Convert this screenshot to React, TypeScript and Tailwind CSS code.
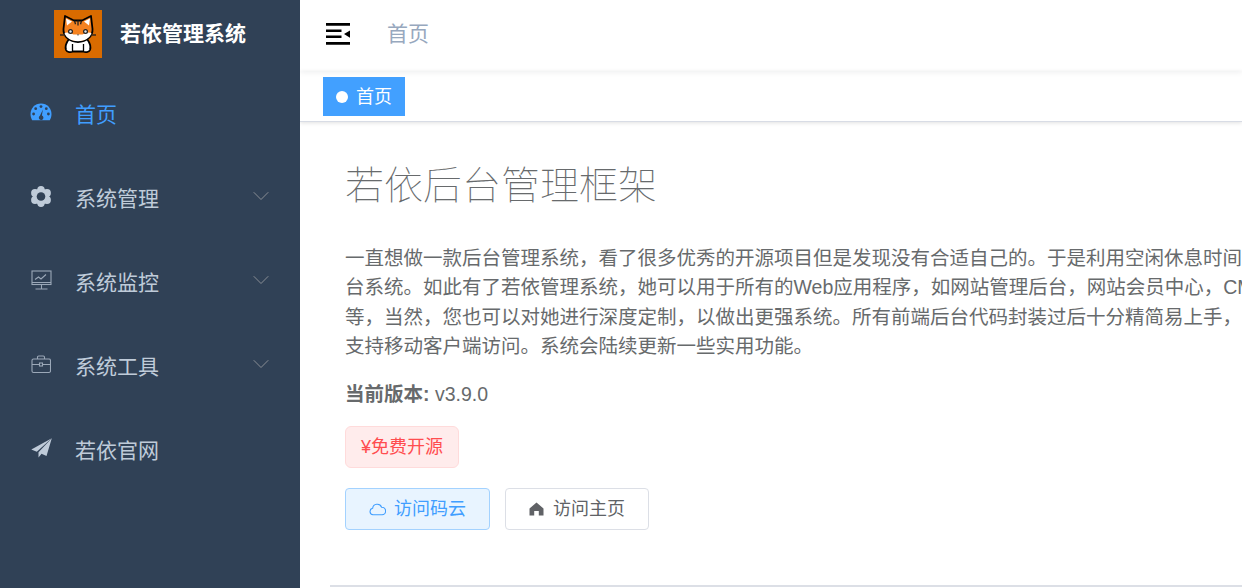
import React from 'react';
import { ChevronDown } from 'lucide-react';

const SIDEBAR = '#304156';

const DashboardIcon = () => (
  <svg width="22" height="18" viewBox="0 0 22 18">
    <path d="M11 0.5C5 0.5 0.5 5.2 0.5 11c0 2.2.6 4.4 1.7 6.2h17.6c1.1-1.8 1.7-4 1.7-6.2C21.500 5.200 17 .5 11 .5z" fill="currentColor" />
    <circle cx="11" cy="3.6" r="1.400" fill={SIDEBAR} />
    <circle cx="5.700" cy="5.700" r="1.400" fill={SIDEBAR} />
    <circle cx="16.300" cy="5.700" r="1.400" fill={SIDEBAR} />
    <circle cx="3.600" cy="11" r="1.400" fill={SIDEBAR} />
    <circle cx="18.400" cy="11" r="1.400" fill={SIDEBAR} />
    <path d="M12.900 6.500L11.900 12.500a2.300 2.300 0 1 1-2 .2z" fill={SIDEBAR} />
  </svg>
);

const GearIcon = () => (
  <svg width="22" height="21" viewBox="0 0 22 21">
    <g fill="currentColor">
      <circle cx="11" cy="10.500" r="8" />
      <circle cx="11" cy="3.800" r="3.700" />
      <circle cx="11" cy="17.200" r="3.700" />
      <circle cx="5" cy="7" r="3.900" />
      <circle cx="17" cy="7" r="3.900" />
      <circle cx="5" cy="14" r="3.900" />
      <circle cx="17" cy="14" r="3.900" />
    </g>
    <circle cx="11" cy="10.500" r="4.300" fill={SIDEBAR} />
  </svg>
);

const MonitorIcon = () => (
  <svg width="21" height="21" viewBox="0 0 21 21" fill="none" stroke="currentColor" strokeWidth="1.100" opacity="0.75">
    <rect x="1" y="1" width="19" height="13.500" />
    <path d="M1 12.500h19M10.500 14.500v4M4.500 19h12" />
    <path d="M4 9.500l3.500-2.500 2.500 2 5-4.500" />
  </svg>
);

const ToolIcon = () => (
  <svg width="20" height="19" viewBox="0 0 20 19" fill="none" stroke="currentColor" strokeWidth="1.100" opacity="0.75">
    <rect x="1" y="4" width="18.500" height="13.500" rx="1.500" />
    <path d="M1 9.500h7M12 9.500h7.500M6.500 4V2.200Q6.500 1 7.700 1h4.600q1.200 0 1.200 1.200V4" />
    <rect x="8.500" y="8" width="3" height="3" />
  </svg>
);

const PlaneIcon = () => (
  <svg width="21" height="20" viewBox="0 0 21 20">
    <path d="M20.800 .3L.3 11.500l5.500 2.200z" fill="currentColor" />
    <path d="M20.800 .3L7.500 14.300v5.200l3-3.800 5 2.300z" fill="currentColor" />
  </svg>
);

const CatLogo = () => (
  <svg width="48" height="48" viewBox="0 0 48 48">
    <rect width="48" height="48" fill="#d96b00" />
    <path d="M15 29c-3 4-4 8-3 11 1 2.500 5 2.500 7 1.500h10c2 1 6 1 7-1.500 1-3 0-7-3-11z" fill="#fff" stroke="#000" strokeWidth="1.800" />
    <path d="M18.500 34v7M29.500 34v7" stroke="#000" strokeWidth="1.300" />
    <path d="M11 6l9 4.500h8L37 6l1.500 13c.5 7-6 13-14.500 13S9 26 9.500 19z" fill="#f58220" stroke="#000" strokeWidth="1.800" strokeLinejoin="round" />
    <path d="M12 8.500l6 3-5 4z" fill="#fff" />
    <path d="M36 8.500l-6 3 5 4z" fill="#fff" />
    <path d="M10.500 23c3-1.500 6 0 9 1.500h9c3-1.500 6-3 9-1.500-1.500 5-7 8.200-13.500 8.200S12 28 10.500 23z" fill="#fff" />
    <path d="M24 10.500v5M20.500 10.800l1 3.500M27.500 10.800l-1 3.500" stroke="#222" strokeWidth="1.300" />
    <circle cx="16.500" cy="21.500" r="2.500" fill="#222" />
    <circle cx="31.500" cy="21.500" r="2.500" fill="#222" />
    <circle cx="16.500" cy="21.500" r="1.200" fill="#dfe6ee" />
    <circle cx="31.500" cy="21.500" r="1.200" fill="#dfe6ee" />
    <path d="M23 24.500h2l-1 1.200z" fill="#222" />
    <path d="M6 25h5M37 25h5" stroke="#3a2a1a" strokeWidth="1.500" />
  </svg>
);

const menus = [
  { label: '首页', Icon: DashboardIcon, active: true, arrow: false },
  { label: '系统管理', Icon: GearIcon, active: false, arrow: true },
  { label: '系统监控', Icon: MonitorIcon, active: false, arrow: true },
  { label: '系统工具', Icon: ToolIcon, active: false, arrow: true },
  { label: '若依官网', Icon: PlaneIcon, active: false, arrow: false },
];

const Sidebar = () => (
  <aside className="w-[300px] h-full shrink-0 bg-[#304156] flex flex-col">
    <div className="h-[72px] shrink-0 flex items-center pl-[54px] pb-[4px]">
      <CatLogo />
      <span className="ml-[18px] pb-[2px] text-[21px] font-bold text-white leading-none">若依管理系统</span>
    </div>
    {menus.map(({ label, Icon, active, arrow }) => (
      <div key={label} className={`h-[84px] shrink-0 flex items-center pl-[30px] pr-[25px] ${active ? 'text-[#409eff]' : 'text-[#bfcbd9]'}`}>
        <span className="w-[22px] flex justify-center -translate-y-[2px]">
          <Icon />
        </span>
        <span className="ml-[23px] pt-[2px] text-[21px] flex-1">{label}</span>
        {arrow && <ChevronDown size={28} strokeWidth={0.8} className="text-[#909399] -translate-y-[2px]" />}
      </div>
    ))}
  </aside>
);

const Toggle = () => (
  <svg width="24" height="22" viewBox="0 0 24 22">
    <path d="M0 0h24v2.700H0zM0 6.500h15.500v2.500H0zM0 12.500h15.500v2.500H0zM0 19h24v2.700H0z" fill="#000" />
    <path d="M24 7.500v7.200L18 11z" fill="#000" />
  </svg>
);

const lines = [
  '一直想做一款后台管理系统，看了很多优秀的开源项目但是发现没有合适自己的。于是利用空闲休息时间开始自己写了一套后',
  '台系统。如此有了若依管理系统，她可以用于所有的Web应用程序，如网站管理后台，网站会员中心，CMS，CRM，OA等',
  '等，当然，您也可以对她进行深度定制，以做出更强系统。所有前端后台代码封装过后十分精简易上手，出错概率低。同时',
  '支持移动客户端访问。系统会陆续更新一些实用功能。',
];

export default function App() {
  return (
    <div className="w-[1242px] h-[588px] flex overflow-hidden bg-white font-['Liberation_Sans','Noto_Sans_CJK_SC',sans-serif]">
      <Sidebar />
      <main className="flex-1 min-w-0 flex flex-col overflow-hidden">
        <header className="h-[71px] shrink-0 flex items-center pl-[26px] pb-[3px] shadow-[0_1px_6px_rgba(0,21,41,0.08)] relative">
          <Toggle />
          <span className="ml-[37px] text-[21px] text-[#97a8be]">首页</span>
        </header>
        <div className="h-[51px] shrink-0 pt-[6px] pl-[23px] border-b border-[#d8dce5] shadow-[0_1px_4px_rgba(0,0,0,0.12)] relative">
          <div className="w-[82px] h-[39px] bg-[#42a0ff] flex items-center pl-[13px] pt-[1px] text-white text-[18px]">
            <span className="w-[12px] h-[12px] rounded-full bg-white mr-[8px]" />
            首页
          </div>
        </div>
        <div className="flex-1 min-h-0 pl-[30px] pt-[41px]">
          <div className="pl-[15px] text-[#676a6c]">
            <h2 className="text-[39px] font-thin leading-[46px] whitespace-nowrap">若依后台管理框架</h2>
            <p className="mt-[35px] text-[19.500px] leading-[29.250px] whitespace-nowrap">
              {lines.map((line) => (
                <span key={line} className="block">{line}</span>
              ))}
            </p>
            <p className="mt-[19px] text-[19.500px] leading-[29.250px]">
              <b>当前版本:</b> <span>v3.9.0</span>
            </p>
            <div className="mt-[17px] w-[114px] h-[42px] rounded-[6px] border border-[#ffdbdb] bg-[#ffecec] text-[#ff4d4f] text-[18px] flex items-center justify-center">
              ¥免费开源
            </div>
            <div className="mt-[20px] flex gap-[15px]">
              <button className="w-[145px] h-[42px] rounded-[4px] border border-[#a3d2ff] bg-[#e8f4ff] text-[#409eff] text-[18px] flex items-center justify-center gap-[8px]">
                <svg width="17" height="14" viewBox="0 0 17 14" fill="none" stroke="currentColor" strokeWidth="1.100">
                  <path d="M4 12.800a3.300 3.300 0 0 1-.4-6.500 4.700 4.700 0 0 1 9-1.100 3.800 3.800 0 0 1 .4 7.600z" />
                </svg>
                访问码云
              </button>
              <button className="w-[144px] h-[42px] rounded-[4px] border border-[#dcdfe6] bg-white text-[#606266] text-[18px] flex items-center justify-center gap-[9px]">
                <svg width="15" height="14" viewBox="0 0 15 14" fill="currentColor">
                  <path d="M7.500 .5L14.500 6.500V13.500H9.800V9H5.200V13.500H.5V6.500z" />
                </svg>
                访问主页
              </button>
            </div>
          </div>
          <hr className="mt-[55px] border-0 h-[2px] bg-[#dcdfe6]" />
        </div>
      </main>
    </div>
  );
}
